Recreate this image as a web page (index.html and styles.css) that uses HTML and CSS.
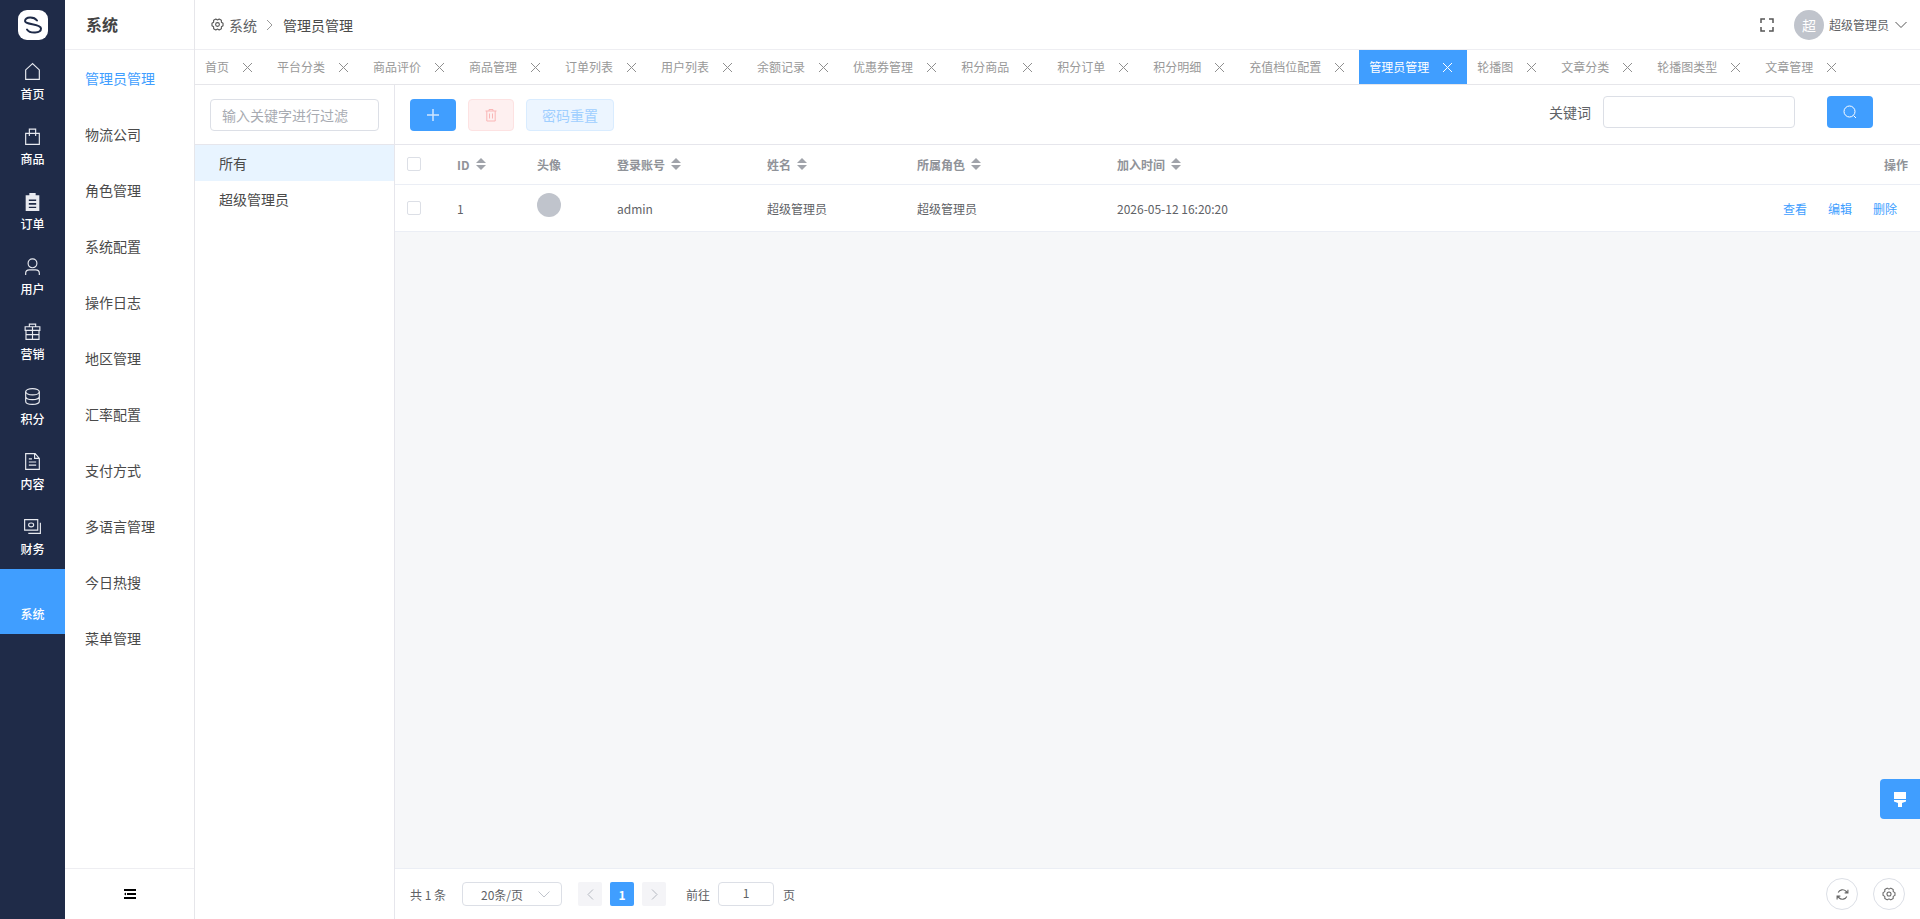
FILE: index.html
```html
<!DOCTYPE html>
<html lang="zh">
<head>
<meta charset="utf-8">
<title>管理员管理</title>
<link rel="stylesheet" href="styles.css">
</head>
<body>
<div class="app">
  <nav class="rail">
    <div class="rail-logo">
      <div class="logo">
        <svg viewBox="0 0 30 30" width="30" height="30"><path d="M19 10.500C16 6.500 7.500 6.500 7 11 6.700 15 23 13.500 23 18.500 23 23.500 12 24 9 19.500" fill="none" stroke="#1f2b48" stroke-width="2" stroke-linecap="round"/></svg>
      </div>
    </div>
    <a class="rail-item"><svg class="rail-icon" viewBox="0 0 20 20"><path d="M10 2.500 3.500 8.500v9h13v-9z" fill="none" stroke="currentColor" stroke-width="1.100"/></svg><span>首页</span></a>
    <a class="rail-item"><svg class="rail-icon" viewBox="0 0 20 20"><path d="M3.500 7h13v10.500h-13zM7 9.500V3h6v6.500" fill="none" stroke="currentColor" stroke-width="1.100"/></svg><span>商品</span></a>
    <a class="rail-item"><svg class="rail-icon" viewBox="0 0 20 20"><path fill="currentColor" fill-rule="evenodd" d="M7 2h6v2h3.500v15h-13V4H7zM6.500 8v1.500h7V8zm0 3.500V13h7v-1.500zm0 3.500v1.200h7V15z"/></svg><span>订单</span></a>
    <a class="rail-item"><svg class="rail-icon" viewBox="0 0 20 20"><circle cx="10" cy="7" r="4.200" fill="none" stroke="currentColor" stroke-width="1.100"/><path d="M3.500 18v-1.500c0-2 1.500-3.300 3.500-3.300h6c2 0 3.500 1.300 3.500 3.300V18" fill="none" stroke="currentColor" stroke-width="1.100"/></svg><span>用户</span></a>
    <a class="rail-item"><svg class="rail-icon" viewBox="0 0 20 20"><path d="M3 5.500h14v3.500H3zM3.800 9h12.400v8.500H3.800zM10 5.500v12M3.800 13h12.400M7 5.500V3h6v2.500" fill="none" stroke="currentColor" stroke-width="1.100"/></svg><span>营销</span></a>
    <a class="rail-item"><svg class="rail-icon" viewBox="0 0 20 20"><g fill="none" stroke="currentColor" stroke-width="1.100"><ellipse cx="10" cy="5.500" rx="6.500" ry="3"/><path d="M3.500 5.500v9c0 1.700 2.900 3 6.500 3s6.500-1.300 6.500-3v-9M3.500 10c0 1.700 2.900 3 6.500 3s6.500-1.300 6.500-3"/></g></svg><span>积分</span></a>
    <a class="rail-item"><svg class="rail-icon" viewBox="0 0 20 20"><path d="M3.500 2.500h9l4 4.500v10.500h-13zM12 2.500V7h4.500M6.500 10.500h7M6.500 13.500h7M6.500 7.500h3" fill="none" stroke="currentColor" stroke-width="1.100"/></svg><span>内容</span></a>
    <a class="rail-item"><svg class="rail-icon" viewBox="0 0 20 20"><path d="M2.500 3.500h12.500v10h-12.500zM17.500 6.500v10H6" fill="none" stroke="currentColor" stroke-width="1.100"/><ellipse cx="8.700" cy="8.500" rx="2.400" ry="1.800" fill="none" stroke="currentColor" stroke-width="1.100"/></svg><span>财务</span></a>
    <a class="rail-item is-active"><span class="rail-blank"></span><span>系统</span></a>
  </nav>

  <aside class="submenu">
    <div class="submenu-title">系统</div>
    <ul class="submenu-list">
      <li class="submenu-item is-active">管理员管理</li>
      <li class="submenu-item">物流公司</li>
      <li class="submenu-item">角色管理</li>
      <li class="submenu-item">系统配置</li>
      <li class="submenu-item">操作日志</li>
      <li class="submenu-item">地区管理</li>
      <li class="submenu-item">汇率配置</li>
      <li class="submenu-item">支付方式</li>
      <li class="submenu-item">多语言管理</li>
      <li class="submenu-item">今日热搜</li>
      <li class="submenu-item">菜单管理</li>
    </ul>
    <div class="submenu-foot">
      <svg width="12" height="10" viewBox="0 0 12 10"><path d="M0 0h12v2H0zM3 4h9v2H3zM0 8h12v2H0zM0 5l2-1.500v3z" fill="#000"/></svg>
    </div>
  </aside>

  <main class="main">
    <header class="topbar">
      <div class="crumbs">
        <svg class="crumb-gear" viewBox="0 0 24 24"><circle cx="12" cy="12" r="3.500" fill="none" stroke="currentColor" stroke-width="2"/><path fill="none" stroke="currentColor" stroke-width="2" stroke-linejoin="round" d="M22.230 9.640V14.360L19.190 16.150 19.160 19.680 15.070 22.040 12 20.300 8.930 22.040 4.840 19.680 4.810 16.150 1.770 14.360V9.640L4.810 7.850 4.840 4.320 8.930 1.960 12 3.700 15.070 1.960 19.160 4.320 19.190 7.850z"/></svg>
        <span class="crumb-muted">系统</span>
        <svg class="crumb-sep" width="7" height="12" viewBox="0 0 7 12"><path d="M1 1l5 5-5 5" fill="none" stroke="currentColor"/></svg>
        <span class="crumb-current">管理员管理</span>
      </div>
      <div class="top-actions">
        <svg class="fullscreen" width="14" height="14" viewBox="0 0 14 14"><path d="M1 5V1h4M9 1h4v4M13 9v4H9M5 13H1V9" fill="none" stroke="#555" stroke-width="1.500"/></svg>
        <div class="user">
          <span class="user-avatar">超</span>
          <span class="user-name">超级管理员</span>
          <svg class="user-caret" width="12" height="8" viewBox="0 0 12 8"><path d="M.5 1 6 6.500 11.500 1" fill="none" stroke="#555"/></svg>
        </div>
      </div>
    </header>

    <div class="tabs">
      <div class="tab">首页<span class="tab-x"></span></div>
      <div class="tab">平台分类<span class="tab-x"></span></div>
      <div class="tab">商品评价<span class="tab-x"></span></div>
      <div class="tab">商品管理<span class="tab-x"></span></div>
      <div class="tab">订单列表<span class="tab-x"></span></div>
      <div class="tab">用户列表<span class="tab-x"></span></div>
      <div class="tab">余额记录<span class="tab-x"></span></div>
      <div class="tab">优惠券管理<span class="tab-x"></span></div>
      <div class="tab">积分商品<span class="tab-x"></span></div>
      <div class="tab">积分订单<span class="tab-x"></span></div>
      <div class="tab">积分明细<span class="tab-x"></span></div>
      <div class="tab">充值档位配置<span class="tab-x"></span></div>
      <div class="tab is-active">管理员管理<span class="tab-x"></span></div>
      <div class="tab">轮播图<span class="tab-x"></span></div>
      <div class="tab">文章分类<span class="tab-x"></span></div>
      <div class="tab">轮播图类型<span class="tab-x"></span></div>
      <div class="tab">文章管理<span class="tab-x"></span></div>
    </div>

    <div class="content">
      <section class="tree">
        <div class="tree-filter"><div class="tree-input">输入关键字进行过滤</div></div>
        <div class="tree-node is-current">所有</div>
        <div class="tree-node">超级管理员</div>
      </section>

      <section class="panel">
        <div class="toolbar">
          <div class="tool-left">
            <button class="btn btn-primary"><svg width="14" height="14" viewBox="0 0 14 14"><path d="M7 1v12M1 7h12" stroke="#cfe6ff" stroke-width="1.500" fill="none"/></svg></button>
            <button class="btn btn-danger"><svg width="14" height="14" viewBox="0 0 14 14"><path d="M1.500 3h11M5 3V1.500h4V3M2.800 3v10h8.400V3M5.500 5.500V10.500M8.500 5.500V10.500" fill="none" stroke="#fab6b6"/></svg></button>
            <button class="btn btn-plain">密码重置</button>
          </div>
          <div class="tool-right">
            <span class="search-label">关键词</span>
            <div class="search-input"></div>
            <button class="btn btn-search"><svg width="16" height="16" viewBox="0 0 16 16"><circle cx="7.500" cy="7.500" r="5.500" fill="none" stroke="#fff"/><path d="M11.700 11.700l2.300 2.300" stroke="#fff" fill="none"/></svg></button>
          </div>
        </div>

        <div class="grid-row grid-head">
          <div class="cell"><span class="check"></span></div>
          <div class="cell">ID<i class="sort"></i></div>
          <div class="cell">头像</div>
          <div class="cell">登录账号<i class="sort"></i></div>
          <div class="cell">姓名<i class="sort"></i></div>
          <div class="cell">所属角色<i class="sort"></i></div>
          <div class="cell">加入时间<i class="sort"></i></div>
          <div class="cell cell-end">操作</div>
        </div>
        <div class="grid-row grid-body">
          <div class="cell"><span class="check"></span></div>
          <div class="cell">1</div>
          <div class="cell"><span class="avatar"></span></div>
          <div class="cell">admin</div>
          <div class="cell">超级管理员</div>
          <div class="cell">超级管理员</div>
          <div class="cell">2026-05-12 16:20:20</div>
          <div class="cell cell-end ops"><a>查看</a><a>编辑</a><a>删除</a></div>
        </div>
        <div class="table-fill"></div>

        <footer class="pager">
          <span class="pager-total">共 1 条</span>
          <div class="pager-size">20条/页<svg width="12" height="7" viewBox="0 0 12 7"><path d="M.5.500 6 6 11.500.500" fill="none" stroke="#c0c4cc"/></svg></div>
          <span class="page-btn"><svg width="7" height="11" viewBox="0 0 7 11"><path d="M6 .500 1 5.500l5 5" fill="none" stroke="#b4b8c0"/></svg></span>
          <span class="page-btn is-current">1</span>
          <span class="page-btn"><svg width="7" height="11" viewBox="0 0 7 11"><path d="M1 .500l5 5-5 5" fill="none" stroke="#b4b8c0"/></svg></span>
          <span class="pager-goto">前往</span>
          <div class="pager-input">1</div>
          <span class="pager-unit">页</span>
          <div class="pager-tools">
            <span class="round-btn"><svg width="13" height="13" viewBox="0 0 24 24" fill="none" stroke="#666" stroke-width="2"><path d="M22 3v6h-6M2 21v-6h6M4 8.500a9 9 0 0 1 14.500-2.500L22 9M2 15l3.500 3a9 9 0 0 0 14.500-2.500"/></svg></span>
            <span class="round-btn"><svg width="14" height="14" viewBox="0 0 24 24" fill="none" stroke="#666" stroke-width="1.800" stroke-linejoin="round"><circle cx="12" cy="12" r="3.500"/><path d="M22.230 9.640V14.360L19.190 16.150 19.160 19.680 15.070 22.040 12 20.300 8.930 22.040 4.840 19.680 4.810 16.150 1.770 14.360V9.640L4.810 7.850 4.840 4.320 8.930 1.960 12 3.700 15.070 1.960 19.160 4.320 19.190 7.850z"/></svg></span>
          </div>
        </footer>
      </section>
    </div>
  </main>

  <button class="float-btn"><svg width="12" height="15" viewBox="0 0 12 15"><path d="M0 0h12v7H0zM0 8h12v1.500L8 11v4H4v-4L0 9.500z" fill="#fff"/></svg></button>
</div>
</body>
</html>
```

FILE: styles.css
```css
* { box-sizing: border-box; }
html, body { margin: 0; height: 100%; overflow: hidden; }
body {
  font-family: "Noto Sans CJK SC", "Noto Sans", sans-serif;
  font-size: 14px;
  color: #303133;
  background: #fff;
}
ul { list-style: none; margin: 0; padding: 0; }
button { border: 0; padding: 0; font: inherit; }

.app { display: flex; height: 919px; position: relative; }

/* Rail */
.rail { width: 65px; flex: none; background: #1f2b48; color: #fff; display: flex; flex-direction: column; }
.rail-logo { height: 49px; padding: 10px 0 0 18px; }
.logo { width: 30px; height: 30px; background: #fff; border-radius: 9px; }
.logo svg { display: block; }
.rail-item { height: 65px; display: flex; flex-direction: column; align-items: center; padding-top: 13px; font-size: 12px; line-height: 20px; color: #fff; font-weight: 500; }
.rail-icon { width: 21px; height: 21px; margin: -1px 0 2px; flex: none; display: block; color: #e8eaf0; }
.rail-blank { height: 22px; flex: none; }
.rail-item.is-active { background: #409eff; }

/* Submenu */
.submenu { width: 130px; flex: none; border-right: 1px solid #e6e6ea; display: flex; flex-direction: column; }
.submenu-title { height: 50px; line-height: 49px; padding-left: 21px; font-size: 16px; font-weight: 700; color: #444; border-bottom: 1px solid #eeeef2; }
.submenu-list { flex: 1; }
.submenu-item { height: 56px; line-height: 56px; padding-left: 20px; font-size: 14px; color: #4a4a4a; }
.submenu-item.is-active { color: #409eff; }
.submenu-foot { height: 51px; border-top: 1px solid #eeeef2; display: flex; align-items: center; justify-content: center; padding-left: 1px; }

/* Main column */
.main { flex: 1; min-width: 0; display: flex; flex-direction: column; }
.topbar { height: 50px; flex: none; border-bottom: 1px solid #eeeef2; display: flex; align-items: center; justify-content: space-between; padding: 0 13px 0 16px; }
.crumbs { display: flex; align-items: center; color: #606266; }
.crumb-gear { width: 13px; height: 13px; color: #555; margin-right: 5px; }
.crumb-muted { color: #606266; }
.crumb-sep { color: #999; margin: 0 10px 0 9px; }
.crumb-current { color: #4a4a4a; }
.top-actions { display: flex; align-items: center; }
.fullscreen { margin-right: 20px; }
.user { display: flex; align-items: center; }
.user-avatar { width: 30px; height: 30px; border-radius: 50%; background: #c0c4cc; color: #fff; font-size: 14px; display: flex; align-items: center; justify-content: center; }
.user-name { font-size: 12px; color: #606266; margin-left: 5px; }
.user-caret { margin-left: 6px; }

/* Tabs */
.tabs { height: 35px; flex: none; border-bottom: 1px solid #e6e6ea; display: flex; font-size: 12px; color: #999; }
.tab { height: 34px; line-height: 34px; padding-left: 10px; padding-right: 14px; display: flex; align-items: center; white-space: nowrap; }
.tab-x { width: 9px; height: 9px; margin-left: 14px; margin-right: 1px; flex: none; background:
  linear-gradient(45deg, transparent calc(50% - .5px), #8f8f8f calc(50% - .5px), #8f8f8f calc(50% + .5px), transparent calc(50% + .5px)),
  linear-gradient(-45deg, transparent calc(50% - .5px), #8f8f8f calc(50% - .5px), #8f8f8f calc(50% + .5px), transparent calc(50% + .5px)); }
.tab.is-active { background: #409eff; color: #fff; }
.tab.is-active .tab-x { background:
  linear-gradient(45deg, transparent calc(50% - .5px), #fff calc(50% - .5px), #fff calc(50% + .5px), transparent calc(50% + .5px)),
  linear-gradient(-45deg, transparent calc(50% - .5px), #fff calc(50% - .5px), #fff calc(50% + .5px), transparent calc(50% + .5px)); }

/* Content */
.content { flex: 1; min-height: 0; display: flex; }
.tree { width: 200px; flex: none; border-right: 1px solid #e6e6ec; }
.tree-filter { height: 60px; padding: 14px 15px; border-bottom: 1px solid #e6e6ec; }
.tree-input { height: 32px; line-height: 30px; border: 1px solid #dcdfe6; border-radius: 4px; padding-left: 11px; font-size: 14px; color: #a8abb2; white-space: nowrap; }
.tree-node { height: 36px; line-height: 36px; padding-left: 24px; font-size: 14px; color: #4a4a4a; }
.tree-node.is-current { background: #e8f4ff; }

.panel { flex: 1; min-width: 0; display: flex; flex-direction: column; }
.toolbar { height: 60px; flex: none; border-bottom: 1px solid #e6e6ec; display: flex; justify-content: space-between; padding: 0 47px 0 15px; }
.tool-left { display: flex; gap: 12px; padding-top: 14px; }
.tool-right { display: flex; padding-top: 11px; }
.btn { height: 32px; border-radius: 4px; display: flex; align-items: center; justify-content: center; }
.btn-primary { width: 46px; background: #409eff; }
.btn-danger { width: 46px; background: #fef0f0; border: 1px solid #fde2e2; }
.btn-plain { width: 88px; background: #ecf5ff; border: 1px solid #d9ecff; color: #a0cfff; font-size: 14px; }
.search-label { line-height: 32px; color: #606266; font-size: 14px; margin-right: 12px; }
.search-input { width: 192px; height: 32px; border: 1px solid #dcdfe6; border-radius: 4px; }
.btn-search { width: 46px; margin-left: 32px; background: #409eff; }

.grid-row { display: grid; grid-template-columns: 62px 80px 80px 150px 150px 200px 1fr 160px; flex: none; border-bottom: 1px solid #ebeef5; font-size: 12px; }
.grid-head { height: 40px; font-weight: 700; color: #909399; }
.grid-body { height: 47px; color: #606266; }
.cell { display: flex; align-items: center; white-space: nowrap; }
.cell:first-child { padding-left: 12px; }
.grid-head .cell { padding-bottom: 1px; }
.cell-end { justify-content: flex-end; padding-right: 12px; }
.check { width: 14px; height: 14px; border: 1px solid #dcdfe6; border-radius: 2px; background: #fff; }
.avatar { width: 24px; height: 24px; border-radius: 50%; background: #c0c4cc; margin-bottom: 6px; }
.sort { display: inline-block; width: 11px; height: 12px; margin-left: 6px; flex: none; position: relative; }
.sort::before, .sort::after { content: ""; position: absolute; left: 0; border-left: 5.5px solid transparent; border-right: 5.5px solid transparent; }
.sort::before { top: 0; border-bottom: 5px solid #a0a3aa; }
.sort::after { bottom: 0; border-top: 5px solid #a0a3aa; }
.ops { color: #409eff; gap: 21px; padding-right: 23px; padding-bottom: 0; }

.table-fill { flex: 1; background: #f6f7f9; }

.pager { height: 51px; flex: none; border-top: 1px solid #ebeef5; display: flex; align-items: center; padding: 0 15px; font-size: 12px; color: #606266; }
.pager-total { width: 52px; }
.pager-size { width: 100px; height: 24px; border: 1px solid #dcdfe6; border-radius: 4px; display: flex; align-items: center; justify-content: space-between; padding: 0 11px 0 18px; margin-right: 16px; font-size: 12px; }
.page-btn { width: 24px; height: 24px; border-radius: 2px; background: #f4f4f7; display: flex; align-items: center; justify-content: center; margin-right: 8px; font-weight: 700; }
.page-btn.is-current { background: #409eff; color: #fff; }
.pager-goto { margin-left: 12px; margin-right: 8px; }
.pager-input { width: 56px; height: 24px; border: 1px solid #dcdfe6; border-radius: 4px; text-align: center; line-height: 20px; }
.pager-unit { margin-left: 9px; }
.pager-tools { margin-left: auto; display: flex; gap: 15px; }
.round-btn { width: 32px; height: 32px; border-radius: 50%; border: 1px solid #dcdfe6; display: flex; align-items: center; justify-content: center; }

.float-btn { position: absolute; right: 0; top: 779px; width: 40px; height: 40px; background: #409eff; border-radius: 4px 0 0 4px; display: flex; align-items: center; justify-content: center; }
```
